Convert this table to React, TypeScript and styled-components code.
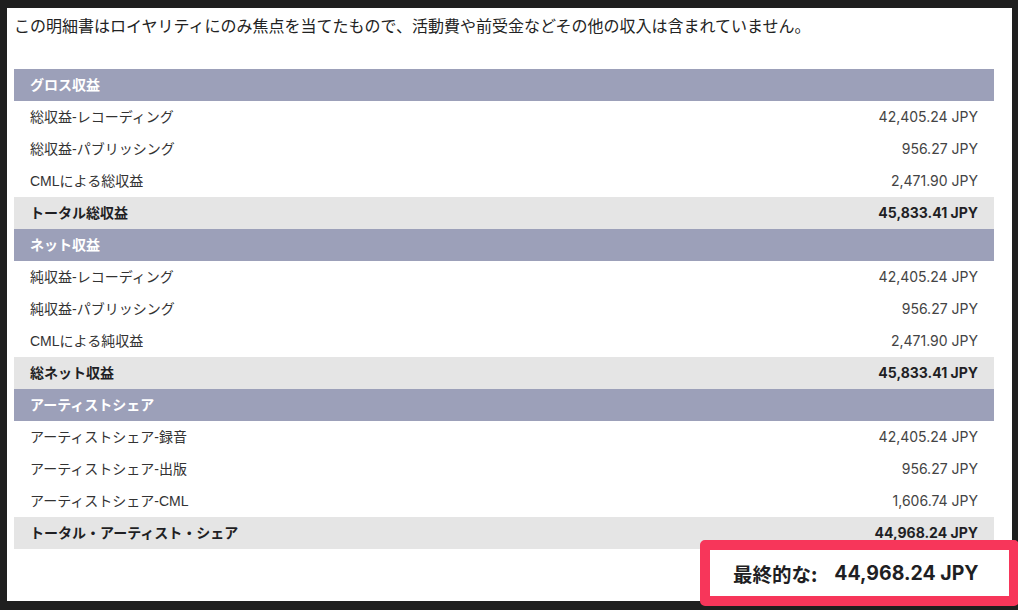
import React from "react";
import styled, { createGlobalStyle } from "styled-components";

const GlobalStyle = createGlobalStyle`
  html, body { margin: 0; padding: 0; background: #1f1f1f; }
  body { width: 1018px; height: 610px; overflow: hidden; }
`;

const Frame = styled.div`
  position: relative;
  width: 1018px;
  height: 610px;
  box-sizing: border-box;
  padding: 8px 6px 9px 7px;
  background: #1f1f1f;
`;

const Panel = styled.div`
  height: 100%;
  box-sizing: border-box;
  background: #ffffff;
  padding: 5px 18px 0 7px;
`;

const Intro = styled.p`
  margin: 0 0 32px 0;
  font-family: "Noto Sans CJK JP", "Liberation Sans", sans-serif;
  font-size: 16px;
  line-height: 24px;
  color: #222;
`;

const Table = styled.div`
  display: flex;
  flex-direction: column;
  width: 980px;
`;

const Row = styled.div<{ $variant?: "head" | "total" | "plain" }>`
  display: flex;
  align-items: center;
  justify-content: space-between;
  height: 32px;
  padding: 0 16px;
  background: ${(p) =>
    p.$variant === "head" ? "#9ca0b9" : p.$variant === "total" ? "#e5e5e5" : "#ffffff"};
`;

const Label = styled.span<{ $variant?: "head" | "total" | "plain" }>`
  font-family: "Liberation Sans", "Noto Sans CJK JP", sans-serif;
  font-size: 14px;
  line-height: 20px;
  margin-top: -1px;
  font-weight: ${(p) => (p.$variant === "plain" ? 400 : 700)};
  color: ${(p) => (p.$variant === "head" ? "#ffffff" : p.$variant === "total" ? "#1f1f24" : "#333")};
`;

const Amount = styled.span<{ $bold?: boolean }>`
  font-family: Inter, "Liberation Sans", sans-serif;
  font-size: 14px;
  line-height: 20px;
  margin-top: -1px;
  font-weight: ${(p) => (p.$bold ? 700 : 400)};
  color: ${(p) => (p.$bold ? "#1f1f24" : "#444")};
`;

const FinalBox = styled.div`
  position: absolute;
  left: 700px;
  top: 540px;
  width: 319px;
  height: 66px;
  box-sizing: border-box;
  border: 10px solid #f7365a;
  border-radius: 5px;
  background: #ffffff;
  display: flex;
  align-items: center;
  padding-left: 23px;
`;

const FinalLabel = styled.span`
  font-family: "Noto Sans CJK JP", sans-serif;
  font-weight: 700;
  font-size: 19.5px;
  color: #1f1f24;
  margin-right: 17px;
`;

const FinalAmount = styled.span`
  font-family: Inter, "Liberation Sans", sans-serif;
  font-weight: 700;
  font-size: 19.5px;
  color: #1f1f24;
`;

type Line = { label: string; amount?: string; kind: "head" | "total" | "plain" };

const lines: Line[] = [
  { label: "グロス収益", kind: "head" },
  { label: "総収益-レコーディング", amount: "42,405.24 JPY", kind: "plain" },
  { label: "総収益-パブリッシング", amount: "956.27 JPY", kind: "plain" },
  { label: "CMLによる総収益", amount: "2,471.90 JPY", kind: "plain" },
  { label: "トータル総収益", amount: "45,833.41 JPY", kind: "total" },
  { label: "ネット収益", kind: "head" },
  { label: "純収益-レコーディング", amount: "42,405.24 JPY", kind: "plain" },
  { label: "純収益-パブリッシング", amount: "956.27 JPY", kind: "plain" },
  { label: "CMLによる純収益", amount: "2,471.90 JPY", kind: "plain" },
  { label: "総ネット収益", amount: "45,833.41 JPY", kind: "total" },
  { label: "アーティストシェア", kind: "head" },
  { label: "アーティストシェア-録音", amount: "42,405.24 JPY", kind: "plain" },
  { label: "アーティストシェア-出版", amount: "956.27 JPY", kind: "plain" },
  { label: "アーティストシェア-CML", amount: "1,606.74 JPY", kind: "plain" },
  { label: "トータル・アーティスト・シェア", amount: "44,968.24 JPY", kind: "total" },
];

export default function App() {
  return (
    <>
      <GlobalStyle />
      <Frame>
        <Panel>
          <Intro>
            この明細書はロイヤリティにのみ焦点を当てたもので、活動費や前受金などその他の収入は含まれていません。
          </Intro>
          <Table>
            {lines.map((l, i) => (
              <Row key={i} $variant={l.kind}>
                <Label $variant={l.kind}>{l.label}</Label>
                {l.amount && <Amount $bold={l.kind === "total"}>{l.amount}</Amount>}
              </Row>
            ))}
          </Table>
        </Panel>
        <FinalBox>
          <FinalLabel>最終的な:</FinalLabel>
          <FinalAmount>44,968.24 JPY</FinalAmount>
        </FinalBox>
      </Frame>
    </>
  );
}
